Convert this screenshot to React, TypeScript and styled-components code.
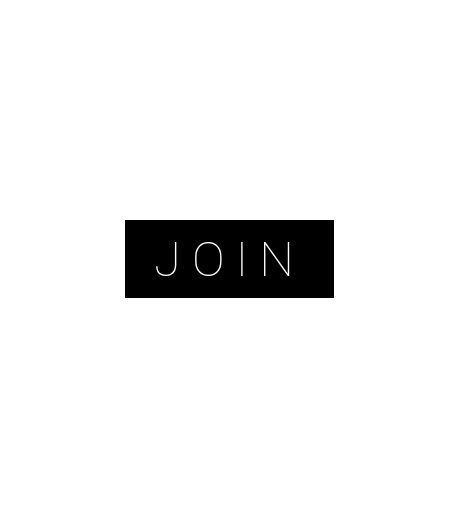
import React from "react";
import styled, { createGlobalStyle } from "styled-components";

const GlobalStyle = createGlobalStyle`
  html, body {
    margin: 0;
    padding: 0;
    background: #fff;
  }
`;

export default function App() {
  return (
    <>
      <GlobalStyle />
      <Page>
        <JoinButton type="button">JOIN</JoinButton>
      </Page>
    </>
  );
}

const Page = styled.div`
  display: flex;
  align-items: center;
  justify-content: center;
  height: 100vh;
`;

const JoinButton = styled.button`
  box-sizing: border-box;
  width: 209px;
  height: 78px;
  padding: 0 0 0 1px;
  border: 0;
  border-radius: 0;
  background: #000;
  color: #fff;
  font-family: "Roboto", sans-serif;
  font-weight: 100;
  font-size: 49px;
  letter-spacing: 11px;
  line-height: 1;
  cursor: pointer;
`;
